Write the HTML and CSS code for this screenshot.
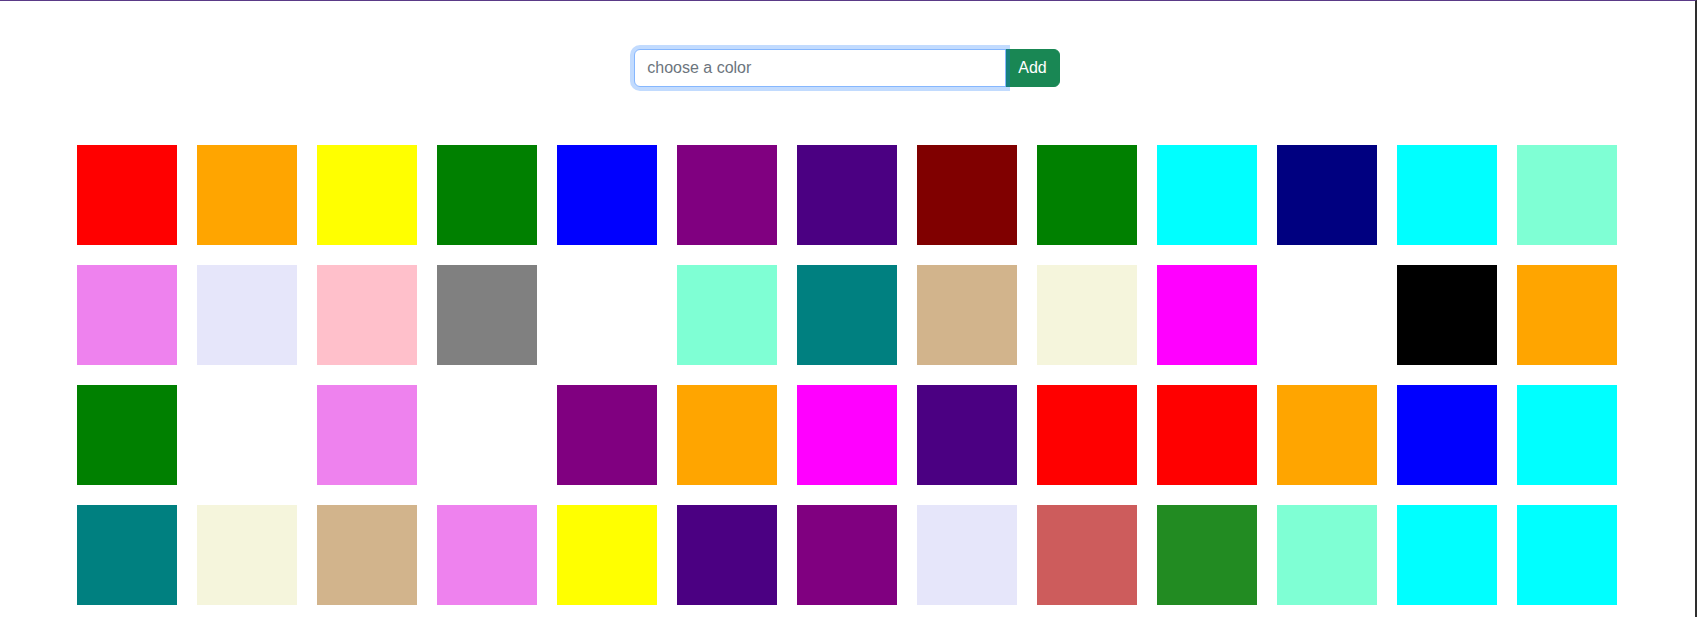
FILE: index.html
```html
<!DOCTYPE html>
<html lang="en">
<head>
<meta charset="utf-8">
<title>Colors</title>
<link rel="stylesheet" href="styles.css">
</head>
<body>
<div class="page">
  <form class="input-group">
    <input class="color-input" type="text" placeholder="choose a color">
    <button class="add-btn" type="button">Add</button>
  </form>
  <div class="grid">
    <div class="sq c-red"></div><div class="sq c-orange"></div><div class="sq c-yellow"></div><div class="sq c-green"></div><div class="sq c-blue"></div><div class="sq c-purple"></div><div class="sq c-indigo"></div><div class="sq c-maroon"></div><div class="sq c-green"></div><div class="sq c-cyan"></div><div class="sq c-navy"></div><div class="sq c-cyan"></div><div class="sq c-aquamarine"></div>
    <div class="sq c-violet"></div><div class="sq c-lavender"></div><div class="sq c-pink"></div><div class="sq c-gray"></div><div class="sq c-white"></div><div class="sq c-aquamarine"></div><div class="sq c-teal"></div><div class="sq c-tan"></div><div class="sq c-beige"></div><div class="sq c-magenta"></div><div class="sq c-white"></div><div class="sq c-black"></div><div class="sq c-orange"></div>
    <div class="sq c-green"></div><div class="sq c-white"></div><div class="sq c-violet"></div><div class="sq c-white"></div><div class="sq c-purple"></div><div class="sq c-orange"></div><div class="sq c-magenta"></div><div class="sq c-indigo"></div><div class="sq c-red"></div><div class="sq c-red"></div><div class="sq c-orange"></div><div class="sq c-blue"></div><div class="sq c-cyan"></div>
    <div class="sq c-teal"></div><div class="sq c-beige"></div><div class="sq c-tan"></div><div class="sq c-violet"></div><div class="sq c-yellow"></div><div class="sq c-indigo"></div><div class="sq c-purple"></div><div class="sq c-lavender"></div><div class="sq c-indianred"></div><div class="sq c-forestgreen"></div><div class="sq c-aquamarine"></div><div class="sq c-cyan"></div><div class="sq c-cyan"></div>
  </div>
</div>
</body>
</html>
```

FILE: styles.css
```css
html, body {
  margin: 0;
  padding: 0;
  height: 100%;
  overflow: hidden;
  background: #fff;
}

body {
  box-sizing: border-box;
  border-top: 1px solid #5a3a87;
  border-right: 2px solid #2e2e2e;
  font-family: "Liberation Sans", Arial, sans-serif;
}

.page {
  display: flex;
  flex-direction: column;
  align-items: center;
  padding-top: 48px;
  padding-right: 1px;
}

.input-group {
  display: flex;
  margin: 0;
}

.color-input {
  position: relative;
  z-index: 2;
  box-sizing: border-box;
  width: 372px;
  height: 38px;
  margin: 0;
  padding: 6px 12px;
  font-family: inherit;
  font-size: 16px;
  line-height: 1.5;
  color: #212529;
  background: #fff;
  border: 1px solid #86b7fe;
  border-radius: 6px 0 0 6px;
  box-shadow: 0 0 0 4px rgba(13, 110, 253, 0.25);
  outline: none;
}

.color-input::placeholder {
  color: #6c757d;
  opacity: 1;
}

.add-btn {
  position: relative;
  z-index: 1;
  box-sizing: border-box;
  height: 38px;
  margin: 0 0 0 -1px;
  padding: 6px 12px;
  font-family: inherit;
  font-size: 16px;
  line-height: 1.5;
  color: #fff;
  background: #198754;
  border: 1px solid #198754;
  border-radius: 0 6px 6px 0;
  cursor: pointer;
}

.grid {
  display: grid;
  grid-template-columns: repeat(13, 100px);
  grid-auto-rows: 100px;
  gap: 20px;
  margin-top: 58px;
}

.c-red { background: red; }
.c-orange { background: orange; }
.c-yellow { background: yellow; }
.c-green { background: green; }
.c-blue { background: blue; }
.c-purple { background: purple; }
.c-indigo { background: indigo; }
.c-maroon { background: maroon; }
.c-cyan { background: cyan; }
.c-navy { background: navy; }
.c-aquamarine { background: aquamarine; }
.c-violet { background: violet; }
.c-lavender { background: lavender; }
.c-pink { background: pink; }
.c-gray { background: gray; }
.c-white { background: white; }
.c-teal { background: teal; }
.c-tan { background: tan; }
.c-beige { background: beige; }
.c-magenta { background: magenta; }
.c-black { background: black; }
.c-indianred { background: indianred; }
.c-forestgreen { background: forestgreen; }
```
